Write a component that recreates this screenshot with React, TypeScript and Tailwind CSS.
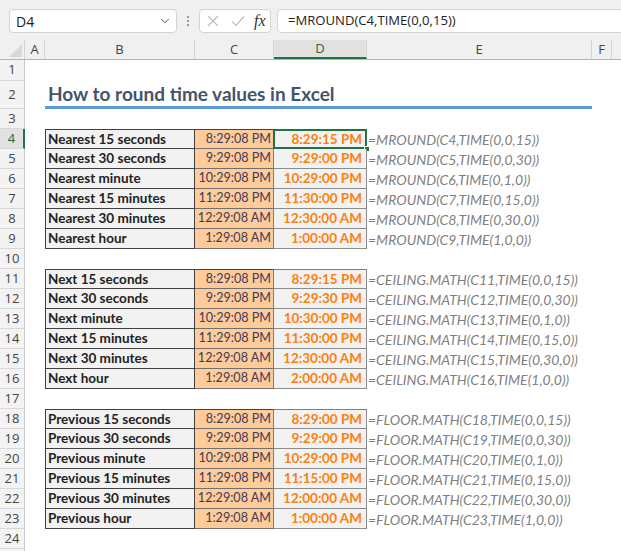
import React from "react";
import { ChevronDown } from "lucide-react";

type Row = { label: string; time: string; result: string; formula: string };

const blocks: { start: number; rows: Row[] }[] = [
  {
    start: 4,
    rows: [
      { label: "Nearest 15 seconds", time: "8:29:08 PM", result: "8:29:15 PM", formula: "=MROUND(C4,TIME(0,0,15))" },
      { label: "Nearest 30 seconds", time: "9:29:08 PM", result: "9:29:00 PM", formula: "=MROUND(C5,TIME(0,0,30))" },
      { label: "Nearest minute", time: "10:29:08 PM", result: "10:29:00 PM", formula: "=MROUND(C6,TIME(0,1,0))" },
      { label: "Nearest 15 minutes", time: "11:29:08 PM", result: "11:30:00 PM", formula: "=MROUND(C7,TIME(0,15,0))" },
      { label: "Nearest 30 minutes", time: "12:29:08 AM", result: "12:30:00 AM", formula: "=MROUND(C8,TIME(0,30,0))" },
      { label: "Nearest hour", time: "1:29:08 AM", result: "1:00:00 AM", formula: "=MROUND(C9,TIME(1,0,0))" },
    ],
  },
  {
    start: 11,
    rows: [
      { label: "Next 15 seconds", time: "8:29:08 PM", result: "8:29:15 PM", formula: "=CEILING.MATH(C11,TIME(0,0,15))" },
      { label: "Next 30 seconds", time: "9:29:08 PM", result: "9:29:30 PM", formula: "=CEILING.MATH(C12,TIME(0,0,30))" },
      { label: "Next minute", time: "10:29:08 PM", result: "10:30:00 PM", formula: "=CEILING.MATH(C13,TIME(0,1,0))" },
      { label: "Next 15 minutes", time: "11:29:08 PM", result: "11:30:00 PM", formula: "=CEILING.MATH(C14,TIME(0,15,0))" },
      { label: "Next 30 minutes", time: "12:29:08 AM", result: "12:30:00 AM", formula: "=CEILING.MATH(C15,TIME(0,30,0))" },
      { label: "Next hour", time: "1:29:08 AM", result: "2:00:00 AM", formula: "=CEILING.MATH(C16,TIME(1,0,0))" },
    ],
  },
  {
    start: 18,
    rows: [
      { label: "Previous 15 seconds", time: "8:29:08 PM", result: "8:29:00 PM", formula: "=FLOOR.MATH(C18,TIME(0,0,15))" },
      { label: "Previous 30 seconds", time: "9:29:08 PM", result: "9:29:00 PM", formula: "=FLOOR.MATH(C19,TIME(0,0,30))" },
      { label: "Previous minute", time: "10:29:08 PM", result: "10:29:00 PM", formula: "=FLOOR.MATH(C20,TIME(0,1,0))" },
      { label: "Previous 15 minutes", time: "11:29:08 PM", result: "11:15:00 PM", formula: "=FLOOR.MATH(C21,TIME(0,15,0))" },
      { label: "Previous 30 minutes", time: "12:29:08 AM", result: "12:00:00 AM", formula: "=FLOOR.MATH(C22,TIME(0,30,0))" },
      { label: "Previous hour", time: "1:29:08 AM", result: "1:00:00 AM", formula: "=FLOOR.MATH(C23,TIME(1,0,0))" },
    ],
  },
];

const ui = { fontFamily: '"Open Sans", "Noto Sans", sans-serif' };
const cell = { fontFamily: 'Lato, "Noto Sans", sans-serif' };

function RowHead({ n, active }: { n?: number; active?: boolean }) {
  return (
    <div
      className={
        "w-[25px] shrink-0 flex items-center justify-center border-b border-[#d8d8d8] text-[13px] " +
        (active
          ? "bg-[#e1e1e1] text-[#1e6b3f] border-r-2 border-r-[#217346]"
          : "bg-[#f3f3f3] text-[#444] border-r border-r-[#c8c8c8]")
      }
      style={ui}
    >
      {n}
    </div>
  );
}

function EmptyRow({ n, h = "h-[20px]" }: { n?: number; h?: string }) {
  return (
    <div className={"flex " + h}>
      <RowHead n={n} />
      <div className="flex-1 bg-white" />
    </div>
  );
}

function TableRow({ n, row, first }: { n: number; row: Row; first: boolean }) {
  const selected = n === 4;
  return (
    <div className="flex h-[20px] whitespace-nowrap" style={cell}>
      <RowHead n={n} active={selected} />
      <div className="w-[20px] shrink-0" />
      <div
        className={
          "w-[150px] shrink-0 flex items-center pl-[2px] bg-[#f2f2f2] border-l border-r border-b border-[#404040] text-[13.5px] font-bold text-[#222] " +
          (first ? "border-t" : "")
        }
      >
        {row.label}
      </div>
      <div
        className={
          "w-[79px] shrink-0 flex items-center justify-end pr-[2px] bg-[#ffcc99] border-r border-r-[#7f7f7f] border-b border-b-[#707070] text-[12.6px] text-[#3d3a5c] " +
          (first ? "border-t border-t-[#404040]" : "")
        }
      >
        {row.time}
      </div>
      <div
        className={
          "relative w-[93px] shrink-0 flex items-center justify-end pr-[4px] bg-[#f2f2f2] border-r border-b border-[#8c8c8c] text-[13.5px] font-bold text-[#ff7f0e] " +
          (first ? "border-t border-t-[#7f7f7f]" : "")
        }
      >
        {row.result}
        {selected && (
          <>
            <div className="absolute -left-px -top-px -right-px -bottom-px border-2 border-[#217346]" />
            <div className="absolute -right-[4px] -bottom-[4px] w-[6px] h-[6px] bg-[#217346] border border-white" />
          </>
        )}
      </div>
      <div className="flex-1 flex items-center pl-[1px] text-[14px] italic text-[#7f7f7f]">
        {row.formula}
      </div>
    </div>
  );
}

function ColHead({ label, w, active }: { label: string; w: string; active?: boolean }) {
  return (
    <div
      className={
        w +
        " shrink-0 flex items-center justify-center text-[13px] border-r border-[#d4d4d4] " +
        (active ? "bg-[#e1e1e1] text-[#1e6b3f] border-b-2 border-b-[#217346]" : "text-[#444]")
      }
      style={ui}
    >
      {label}
    </div>
  );
}

export default function App() {
  return (
    <div className="w-[621px] h-[551px] overflow-hidden bg-white">
      {/* formula bar */}
      <div className="h-[40px] bg-[#f0f0f0] flex items-start pt-[9px] pl-[9px] overflow-hidden">
        <div
          className="w-[168px] h-[24px] shrink-0 bg-white rounded-[4px] border border-[#d4d4d4] flex items-center justify-between pl-[6px] pr-[4px] text-[14px] text-[#222]"
          style={ui}
        >
          D4
          <ChevronDown size={14} strokeWidth={1.5} className="text-[#444]" />
        </div>
        <div className="w-[22px] h-[24px] shrink-0 flex flex-col items-center justify-center gap-[2px]">
          <span className="w-[2px] h-[2px] bg-[#9a9a9a]" />
          <span className="w-[2px] h-[2px] bg-[#9a9a9a]" />
          <span className="w-[2px] h-[2px] bg-[#9a9a9a]" />
        </div>
        <div className="w-[72px] h-[24px] shrink-0 bg-white rounded-[4px] border border-[#d4d4d4] flex items-center pl-[6px]">
          <svg width="14" height="14" viewBox="0 0 14 14" fill="none" stroke="#bdbdbd" strokeWidth="1.2">
            <path d="M2 2 L12 12 M12 2 L2 12" />
          </svg>
          <svg width="16" height="14" viewBox="0 0 16 14" fill="none" stroke="#bdbdbd" strokeWidth="1.2" className="ml-[10px]">
            <path d="M2 7.5 L6 11.5 L14 2.5" />
          </svg>
          <span
            className="ml-[8px] text-[16px] italic text-[#333] leading-none"
            style={{ fontFamily: '"Liberation Serif", serif' }}
          >
            fx
          </span>
        </div>
        <div
          className="h-[24px] flex-1 -mr-[8px] ml-[6px] bg-white rounded-[4px] border border-[#d4d4d4] flex items-center pl-[10px] text-[13.1px] text-[#222]"
          style={ui}
        >
          =MROUND(C4,TIME(0,0,15))
        </div>
      </div>

      {/* column headers */}
      <div className="flex h-[20px] bg-[#f0f0f0] border-b border-[#b4b4b4]">
        <div className="w-[25px] shrink-0 relative border-r border-[#d4d4d4]">
          <div className="absolute right-[2px] bottom-[2px] w-0 h-0 border-l-[13px] border-l-transparent border-b-[13px] border-b-[#d8d8d8]" />
        </div>
        <ColHead label="A" w="w-[20px]" />
        <ColHead label="B" w="w-[150px]" />
        <ColHead label="C" w="w-[79px]" />
        <ColHead label="D" w="w-[93px]" active />
        <ColHead label="E" w="w-[225px]" />
        <ColHead label="F" w="w-[20px]" />
        <div className="flex-1" />
      </div>

      <EmptyRow n={1} h="h-[21px]" />
      <div className="flex h-[28px]">
        <RowHead n={2} />
        <div className="w-[20px] shrink-0" />
        <div className="w-[547px] shrink-0 border-b-[3px] border-[#5b9bd5] flex items-end pb-[3px] pl-[3px]">
          <span className="text-[19px] font-bold text-[#44546a] leading-none whitespace-nowrap" style={cell}>
            How to round time values in Excel
          </span>
        </div>
        <div className="flex-1" />
      </div>
      <EmptyRow n={3} />

      {blocks.map((b) => (
        <React.Fragment key={b.start}>
          {b.rows.map((r, i) => (
            <TableRow key={i} n={b.start + i} row={r} first={i === 0} />
          ))}
          <EmptyRow n={b.start + b.rows.length} />
        </React.Fragment>
      ))}
      <EmptyRow />
    </div>
  );
}
